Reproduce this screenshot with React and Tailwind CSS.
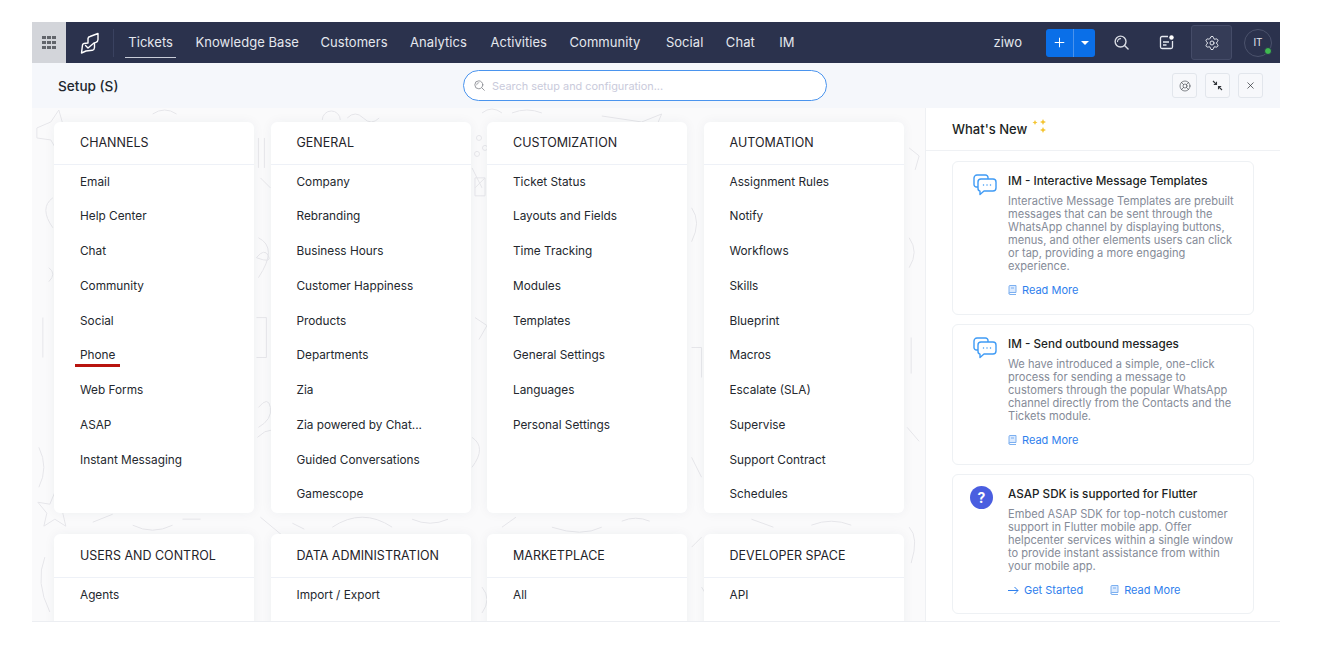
import React from "react";
import { Settings, Plus, X, LifeBuoy } from "lucide-react";

const nav = [
  ["Tickets", "", 1],
  ["Knowledge Base", "mr-[-1px]"],
  ["Customers", ""],
  ["Analytics", "mr-[1px]"],
  ["Activities", ""],
  ["Community", "mr-[3px]"],
  ["Social", ""],
  ["Chat", "mr-[2px]"],
  ["IM", ""],
];

const row1 = [
  ["CHANNELS", ["Email", "Help Center", "Chat", "Community", "Social", "Phone", "Web Forms", "ASAP", "Instant Messaging"]],
  ["GENERAL", ["Company", "Rebranding", "Business Hours", "Customer Happiness", "Products", "Departments", "Zia", "Zia powered by Chat...", "Guided Conversations", "Gamescope"]],
  ["CUSTOMIZATION", ["Ticket Status", "Layouts and Fields", "Time Tracking", "Modules", "Templates", "General Settings", "Languages", "Personal Settings"]],
  ["AUTOMATION", ["Assignment Rules", "Notify", "Workflows", "Skills", "Blueprint", "Macros", "Escalate (SLA)", "Supervise", "Support Contract", "Schedules"]],
];
const row2 = [
  ["USERS AND CONTROL", ["Agents"]],
  ["DATA ADMINISTRATION", ["Import / Export"]],
  ["MARKETPLACE", ["All"]],
  ["DEVELOPER SPACE", ["API"]],
];

function Card({ title, items, tall }) {
  return (
    <div className={`bg-white rounded-md shadow-[0_0_12px_rgba(40,50,80,0.05)] ${tall ? "h-[391px]" : "h-[120px]"}`}>
      <div className={`${tall ? "h-[43px] pt-[1px]" : "h-[44px] pt-[2px]"} pl-[26px] flex items-center border-b border-[#eef1f7] text-[12.500px] text-[#1f2329]`}>{title}</div>
      <div>
        {items.map((t) => (
          <div key={t} className="h-[34.750px] pl-[26px] flex items-center text-[11.800px] text-[#24282e]">
            {t === "Phone" ? (
              <span className="relative">
                Phone
                <span className="absolute left-[-5px] top-[17px] w-[45px] h-[3px] bg-[#b8140f]" />
              </span>
            ) : (
              t
            )}
          </div>
        ))}
      </div>
    </div>
  );
}

function ChatIcon() {
  return (
    <svg width="24" height="22" viewBox="0 0 24 22" fill="none" stroke="#3f9bf5" strokeWidth="1.400" strokeLinejoin="round" strokeLinecap="round" className="absolute left-[20px] top-[12px]">
      <path d="M5 13H3.500A2.500 2.500 0 0 1 1 10.500V4A3 3 0 0 1 4 1h8.500A2.500 2.500 0 0 1 15 3.500V5" />
      <path d="M8 5h12a3 3 0 0 1 3 3v6a3 3 0 0 1-3 3h-9l-4 3.500V17.200A3 3 0 0 1 5 14V8a3 3 0 0 1 3-3z" fill="#fff" />
      <path d="M10.500 11h.01M14 11h.01M17.500 11h.01" strokeWidth="1.500" />
    </svg>
  );
}

function DocIcon() {
  return (
    <svg width="9" height="10" viewBox="0 0 9 10" fill="#dbeafe" stroke="#6fa8ee" strokeWidth="0.900" className="shrink-0">
      <path d="M1 8.500V1.500A1 1 0 0 1 2 .5h6v7H2a1 1 0 0 0 0 2h6" />
      <path d="M3 3h3" />
    </svg>
  );
}

function Lens({ size, color, sw }) {
  return (
    <svg width={size} height={size} viewBox="0 0 16 16" fill="none" stroke={color} strokeWidth={sw} strokeLinecap="round">
      <circle cx="7" cy="7" r="5.800" />
      <path d="M11.300 11.300L15 15" />
      <path d="M3.800 7A3.200 3.200 0 0 1 7 3.800" strokeWidth={sw * 0.8} />
    </svg>
  );
}

function ReadMore() {
  return (
    <span className="flex items-center gap-[5px]">
      <DocIcon />
      <span>Read More</span>
    </span>
  );
}

function News({ icon, title, text, links, h }) {
  return (
    <div className={`relative border border-[#eef1f4] rounded-md ${h} pl-[55px] pt-[11px] whitespace-nowrap`}>
      {icon}
      <div className="text-[11.700px] leading-[16px] font-medium text-[#1c1f24]">{title}</div>
      <div className="mt-[6px] text-[11.100px] leading-[13px] text-[#858b98]">
        {text.map((l) => (
          <div key={l}>{l}</div>
        ))}
      </div>
      <div className="mt-[10px] flex items-center gap-[27px] text-[11px] leading-[14px] text-[#2f80ed]">{links}</div>
    </div>
  );
}

function Doodles() {
  return (
    <svg className="absolute inset-0 w-full h-full" viewBox="0 0 893 514" fill="none" stroke="#e6e6ea" strokeWidth="1">
      <path d="M4 20l14-6 8-12 4 14 12 4-12 8-4 18-8-14-14-2z" />
      <path d="M5 395l12 2 5-12 5 12 13 1-10 8 3 13-11-7-11 7 3-13z" />
      <path d="M226 30v30M232 30v30M228 70l10 10M225 330q15-15 30 0t-10 20M228 410l30 25M300 420q30-20 60 0M520 420q30 10 50 0" />
      <path d="M226 130q20 10 0 40M224 210h10v40h-10M226 300q10-12 12 0t-12 20" />
      <path d="M450 5q10-8 20 0M480 5q15-6 30 0M570 8l40 6 20-8-6 14M120 6q12-8 24 0M290 12a9 9 0 0 1 18 0M315 10q8-8 16 0t16 0" />
      <path d="M440 60l10 20M443 210l12 8-8 14M440 330q15 10 0 30M660 100q10 14 0 34M660 240h10v30M660 350l10 20M660 440l10-10" />
      <path d="M20 90q-14 10 0 30M10 210v40M6 340q10 20 0 40M12 450q-10 25 5 55M16 160q8 6 0 14" />
      <path d="M878 40l10 8-4 14M878 130q10 14 0 30M880 230v36M876 320l12 14M878 420q10 10 2 36" />
      <path d="M240 490q8 8 0 20M450 480q10 12 0 26M670 480l12 20" />
      <path d="M60 415l20-8M100 418q20 10 40 0M150 412h18M260 416l12 6M380 412q18 8 36 0M470 420l14-10M590 414q14-6 28 0M720 412l22 8M780 418q20-8 40 0" />
      <circle cx="447" cy="30" r="2.500" />
      <circle cx="453" cy="40" r="2.500" />
      <circle cx="445" cy="46" r="2.500" />
      <path d="M443 70h10v18h-10zM443 80l10-10" />
      <path d="M224 150q8-10 12-2t-12 2z" />
    </svg>
  );
}

export default function App() {
  return (
    <div className="w-[1328px] h-[658px] bg-white pt-[22px] px-[32px] overflow-hidden" style={{ fontFamily: "Inter, 'Noto Sans', sans-serif" }}>
      <div className="w-[1248px] h-[600px] flex flex-col overflow-hidden border-b border-[#eceef2]">
        <header className="h-[41px] shrink-0 bg-[#2b324d] flex items-center text-[#e4e7ee]">
          <div className="w-[34px] h-[41px] bg-[#d3d5da] flex items-center justify-center">
            <div className="grid grid-cols-3 gap-[1.500px]">
              {Array.from({ length: 9 }).map((_, i) => (
                <span key={i} className="w-[3.500px] h-[3.500px] bg-[#62656b]" />
              ))}
            </div>
          </div>
          <div className="w-[47px] flex justify-center">
            <svg width="20" height="22" viewBox="0 0 20 22" fill="none" stroke="#fff" strokeWidth="1.400" strokeLinejoin="round" strokeLinecap="round">
              <path d="M1.500 21 2.500 13a2 2 0 0 1 1.500-1.500L8 11V6.500A2.500 2.500 0 0 1 10 4.500L18 1.500V7.500a3 3 0 0 1-2 2.800l-1.500.5V15.500a3 3 0 0 1-2.200 2.800L6 19z" />
              <path d="M5.500 13.500 8 16l6-5" />
            </svg>
          </div>
          <div className="w-px h-[28px] bg-[#3a4260]" />
          <nav className="flex items-center ml-[3px] text-[13px] tracking-[0.05px]">
            {nav.map(([n, cls, active]) => (
              <div key={n} className={`relative px-[11.250px] h-[41px] flex items-center ${cls}`}>
                {n}
                {active && <span className="absolute left-[8px] right-[8px] bottom-[5px] h-px bg-[#c8ccd8]" />}
              </div>
            ))}
          </nav>
          <div className="ml-auto flex items-center">
            <span className="text-[13px] mr-[24px]">ziwo</span>
            <div className="w-[49px] h-[28px] mr-[19px] bg-[#0a6fe8] rounded-[3px] flex items-center text-white">
              <div className="w-[28px] flex justify-center border-r border-[#4a92ec] h-full items-center">
                <Plus size={15} strokeWidth={1.600} />
              </div>
              <div className="flex-1 flex justify-center">
                <span className="w-0 h-0 border-x-[4px] border-x-transparent border-t-[4px] border-t-white" />
              </div>
            </div>
            <div className="mr-[30px] flex">
              <Lens size={15} color="#d9dce4" sw={1.500} />
            </div>
            <svg width="15" height="15" viewBox="0 0 15 15" fill="none" stroke="#e4e7ee" strokeWidth="1.300" className="mr-[17px]">
              <path d="M9 1.500H3A1.500 1.500 0 0 0 1.500 3v9A1.500 1.500 0 0 0 3 13.500h9a1.500 1.500 0 0 0 1.500-1.500V6" />
              <path d="M4 7h6M4 10h3.500" />
              <circle cx="12.500" cy="2.500" r="2.200" fill="#fff" stroke="none" />
            </svg>
            <div className="w-[41px] h-[35px] mr-[12px] rounded-[3px] bg-[#353c57] border border-[#454c68] flex items-center justify-center">
              <Settings size={16} strokeWidth={1.500} />
            </div>
            <div className="relative w-[28px] h-[28px] mr-[8px] rounded-full border border-[#4b526c] flex items-center justify-center text-[10px]">
              IT
              <span className="absolute right-[-1px] bottom-[1px] w-[6px] h-[6px] rounded-full bg-[#3fb950] border border-[#2b324d] box-content" />
            </div>
          </div>
        </header>

        <div className="h-[45px] shrink-0 bg-[#f5f7fb] flex items-center relative">
          <span className="ml-[26px] w-[62px] whitespace-nowrap pt-[1px] text-[13.600px] font-medium text-[#23272e]">Setup (S)</span>
          <div className="ml-[343px] w-[364px] h-[31px] bg-white border border-[#4a94ee] rounded-[16px] flex items-center pl-[10px] gap-[7px]">
            <Lens size={11} color="#8b8d93" sw={1.300} />
            <span className="pt-[1px] text-[10.900px] text-[#c9cadb]">Search setup and configuration...</span>
          </div>
          <div className="ml-auto mr-[17px] flex gap-[8px] text-[#44484f]">
            <div className="w-[25px] h-[25px] rounded-[3px] border border-[#e2e6ec] bg-[#f7f8fb] flex items-center justify-center">
              <LifeBuoy size={12} strokeWidth={1.300} />
            </div>
            <div className="w-[25px] h-[25px] rounded-[3px] border border-[#e2e6ec] bg-[#f7f8fb] flex items-center justify-center">
              <svg width="11" height="11" viewBox="0 0 11 11" fill="none" stroke="#33363c" strokeWidth="1.100">
                <path d="M1 1l3.500 3.500M1.800 4.500h2.700V1.800" />
                <path d="M10 10L6.500 6.500M9.200 6.500H6.500v2.700" />
              </svg>
            </div>
            <div className="w-[25px] h-[25px] rounded-[3px] border border-[#e2e6ec] bg-[#f7f8fb] flex items-center justify-center text-[#26292e]">
              <X size={11} strokeWidth={1.500} />
            </div>
          </div>
        </div>

        <div className="flex-1 flex min-h-0">
          <div className="relative w-[893px] shrink-0 bg-[#fafafb] overflow-hidden border-r border-[#eef0f3] box-content">
            <Doodles />
            <div className="relative pt-[14px] pl-[22px] grid grid-cols-[200px_200px_200px_200px] gap-x-[16.500px] gap-y-[21px]">
              {row1.map(([t, i]) => (
                <Card key={t} title={t} items={i} tall />
              ))}
              {row2.map(([t, i]) => (
                <Card key={t} title={t} items={i} />
              ))}
            </div>
          </div>
          <aside className="flex-1 bg-white min-w-0">
            <div className="h-[43px] pt-[1px] border-b border-[#eff1f4] pl-[26px] flex items-center text-[13px] font-medium text-[#1c1f24] relative">
              What's New
              <svg width="16" height="16" viewBox="0 0 16 16" fill="#f4c430" className="ml-[5px] -mt-[8px]">
                <path d="M3 2l.8 1.700L5.500 4.500 3.800 5.300 3 7l-.8-1.700L.5 4.500l1.700-.8zM11 1l.9 1.900L14 4l-2.100 1.100L11 7l-.9-1.900L8 4l2.100-1.100zM11 9l.9 1.900L14 12l-2.100 1.100L11 15l-.9-1.900L8 12l2.100-1.100z" />
              </svg>
            </div>
            <div className="ml-[26px] mr-[26px] mt-[10px] flex flex-col gap-[9px]">
              <News
                h="h-[154px]"
                icon={<ChatIcon />}
                title="IM - Interactive Message Templates"
                text={["Interactive Message Templates are prebuilt", "messages that can be sent through the", "WhatsApp channel by displaying buttons,", "menus, and other elements users can click", "or tap, providing a more engaging", "experience."]}
                links={<ReadMore />}
              />
              <News
                h="h-[141px]"
                icon={<ChatIcon />}
                title="IM - Send outbound messages"
                text={["We have introduced a simple, one-click", "process for sending a message to", "customers through the popular WhatsApp", "channel directly from the Contacts and the", "Tickets module."]}
                links={<ReadMore />}
              />
              <News
                h="h-[140px]"
                icon={
                  <span className="absolute left-[17px] top-[11px] w-[23px] h-[23px] rounded-full bg-[#4a5ee0] text-white text-[14px] font-bold flex items-center justify-center">?</span>
                }
                title="ASAP SDK is supported for Flutter"
                text={["Embed ASAP SDK for top-notch customer", "support in Flutter mobile app. Offer", "helpcenter services within a single window", "to provide instant assistance from within", "your mobile app."]}
                links={
                  <>
                    <span className="flex items-center gap-[5px]">
                      <svg width="11" height="9" viewBox="0 0 11 9" fill="none" stroke="#2f80ed" strokeWidth="1">
                        <path d="M0 4.500h10M6.500 1l3.500 3.500L6.500 8" />
                      </svg>
                      Get Started
                    </span>
                    <ReadMore />
                  </>
                }
              />
            </div>
          </aside>
        </div>
      </div>
    </div>
  );
}
